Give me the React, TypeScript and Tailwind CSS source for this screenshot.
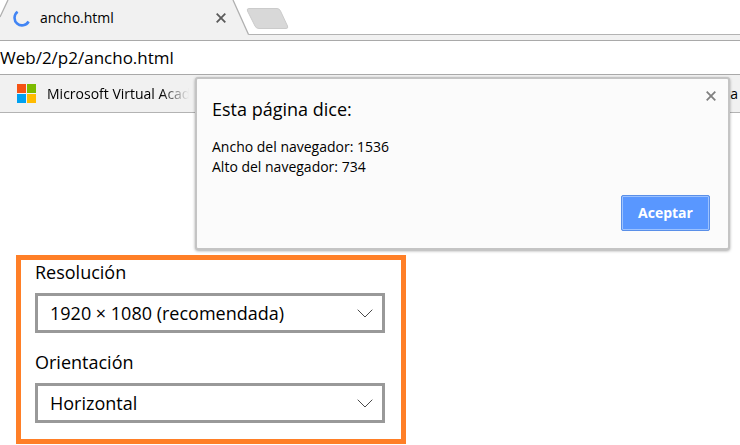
import { useState } from "react";

function CloseIcon() {
  return (
    <svg viewBox="0 0 10 10" className="size-[10px]" fill="none" stroke="currentColor" strokeWidth="1.800" aria-hidden="true">
      <path d="M0.7 0.7 9.3 9.3M9.3 0.7 0.7 9.3" />
    </svg>
  );
}

function Spinner() {
  return (
    <svg viewBox="0 0 18 18" className="size-[18px]" fill="none" stroke="#4285f4" strokeWidth="2.600" aria-hidden="true">
      <path d="M5.600 2.800A7.500 7.500 0 1 0 16.600 12.500" />
    </svg>
  );
}

function MicrosoftLogo() {
  return (
    <svg viewBox="0 0 19 19" className="size-[19px] shrink-0" aria-hidden="true">
      <path fill="#f65314" d="M0 0h9v9H0z" />
      <path fill="#7cbb00" d="M10 0h9v9h-9z" />
      <path fill="#00a1f1" d="M0 10h9v9H0z" />
      <path fill="#ffbb00" d="M10 10h9v9h-9z" />
    </svg>
  );
}

function TabStrip() {
  return (
    <div className="flex h-[35px] border-b border-[#b3b3b3] bg-white">
      <div className="relative isolate -mb-px flex h-[35px] w-[249px] items-center pl-3">
        <svg viewBox="0 0 249 35" className="absolute inset-0 -z-10 size-full" aria-hidden="true">
          <path d="M0 17 8 0H233L248.500 35H0z" fill="#f1f1f1" />
          <path d="M0 17 8 0M233 0 248.500 34.500" fill="none" stroke="#b0b0b0" strokeWidth="1.300" />
        </svg>
        <Spinner />
        <span className="ml-2.5 text-[14px] leading-5">ancho.html</span>
        <button type="button" aria-label="Cerrar pestaña" className="ml-auto mr-[23px] text-[#5a5a5a]">
          <CloseIcon />
        </button>
      </div>
      <button type="button" aria-label="Nueva pestaña" className="-ml-1 mt-[7px] h-[23px] w-[45px]">
        <svg viewBox="0 0 45 23" className="size-full" aria-hidden="true">
          <path
            d="M4 1.500H32Q34.500 1.500 35.500 4L42.500 19Q43.500 21.500 41 21.500H14Q11 21.500 10 19L2.500 4Q1.500 1.500 4 1.500z"
            fill="#d8d8d8"
            stroke="#cbcbcb"
          />
        </svg>
      </button>
    </div>
  );
}

function Bookmarks() {
  return (
    <nav className="flex h-[38px] items-center justify-between border-b border-[#b3b3b3] bg-[#f1f1f1] pl-[17px] text-[14px] leading-5">
      <a href="#academy" className="flex items-center gap-[11px]">
        <MicrosoftLogo />
        <span className="w-[142px] overflow-hidden whitespace-nowrap bg-linear-to-r from-black from-80% to-transparent bg-clip-text text-transparent">
          Microsoft Virtual Academy
        </span>
      </a>
      <a href="#biblioteca" className="pr-0.5">ca</a>
    </nav>
  );
}

function AlertDialog() {
  return (
    <div
      role="dialog"
      aria-labelledby="dialog-title"
      className="absolute left-[195px] right-[10px] top-[77px] flex flex-col rounded-[3px] border-2 border-[#c4c4c4] bg-[#fbfbfb] pb-[17px] pl-[15px] pr-[18px] pt-4 shadow-[0_1px_3px_rgba(0,0,0,0.35)]"
    >
      <h1 id="dialog-title" className="text-[18px] leading-7">Esta página dice:</h1>
      <button type="button" aria-label="Cerrar" className="absolute right-[12px] top-[12px] text-[#808080]">
        <CloseIcon />
      </button>
      <p className="mt-3.5 text-[14px] leading-5">
        Ancho del navegador: 1536
        <br />
        Alto del navegador: 734
      </p>
      <button
        type="button"
        className="mt-[18px] h-9 w-[89px] self-end rounded-[2px] border border-[#5a8fe8] bg-[#5997ff] text-[14px] leading-5 font-bold text-white inset-ring inset-ring-[#9cc2ff]"
      >
        Aceptar
      </button>
    </div>
  );
}

function SelectField({ id, label, options }: { id: string; label: string; options: string[] }) {
  return (
    <div>
      <label htmlFor={id} className="block text-[18px] leading-6">{label}</label>
      <div className="mt-[9px] grid">
        <select
          id={id}
          className="col-start-1 row-start-1 h-10 w-full appearance-none border-3 border-[#999999] bg-white pl-3 pr-10 text-[18px] leading-6"
        >
          {options.map((option) => (
            <option key={option}>{option}</option>
          ))}
        </select>
        <svg
          viewBox="0 0 16 9"
          className="pointer-events-none col-start-1 row-start-1 mr-3 h-[9px] w-4 self-center justify-self-end"
          fill="none"
          stroke="#4a4a4a"
          strokeWidth="1"
          aria-hidden="true"
        >
          <path d="M0.700 0.700 8 8 15.300 0.700" />
        </svg>
      </div>
    </div>
  );
}

export default function App() {
  const [url, setUrl] = useState("Web/2/p2/ancho.html");
  return (
    <div className="relative bg-white font-['Segoe_UI','Open_Sans','Noto_Sans',sans-serif] text-black">
      <header>
        <TabStrip />
        <div className="bg-[#f1f1f1] pt-[5px]">
          <input
            type="text"
            aria-label="Dirección"
            value={url}
            onChange={(event) => setUrl(event.target.value)}
            className="block h-[35px] w-full border-y border-[#a9a9a9] bg-white text-[17px] leading-6 outline-none"
          />
        </div>
        <Bookmarks />
      </header>
      <main className="px-4 pt-[142px]">
        <form className="flex w-full max-w-[390px] flex-col gap-[17px] border-5 border-[#ff7f27] pb-4 pl-3.5 pr-4">
          <SelectField id="resolucion" label="Resolución" options={["1920 × 1080 (recomendada)", "1600 × 900"]} />
          <SelectField id="orientacion" label="Orientación" options={["Horizontal", "Vertical"]} />
        </form>
      </main>
      <AlertDialog />
    </div>
  );
}
